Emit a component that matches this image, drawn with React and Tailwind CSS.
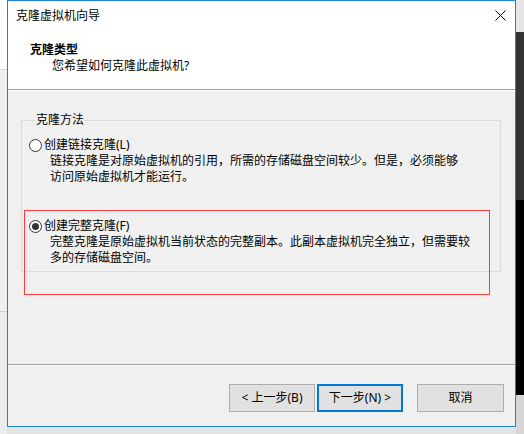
import { useState } from "react";

const Radio = ({ checked, label, lines, onSelect }) => (
  <div className="flex flex-col">
    <button type="button" onClick={onSelect} className="flex h-[16px] items-center text-left">
      <span className="flex h-[13px] w-[13px] items-center justify-center rounded-full border border-[#333333] bg-white">
        {checked && <span className="h-[7px] w-[7px] rounded-full bg-[#333333]" />}
      </span>
      <span className="ml-[2px] whitespace-nowrap">{label}</span>
    </button>
    <div className="pl-[21px] whitespace-nowrap">
      {lines.map((line) => (
        <p key={line}>{line}</p>
      ))}
    </div>
  </div>
);

const App = () => {
  const [mode, setMode] = useState("full");

  return (
    <div className="flex h-[434px] w-[524px] overflow-hidden bg-[#ececec] font-['Noto_Sans','Noto_Sans_CJK_SC',sans-serif] text-[12px] leading-[16px] text-black">
      {/* window behind, left side */}
      <div className="flex w-[7px] flex-col">
        <div className="h-[70px] border-b border-[#d9d9d9] bg-white" />
        <div className="h-[242px] border-b border-[#cfcfcf] bg-[#f0f0f0]" />
        <div className="flex-1 bg-[#ececec]" />
      </div>

      <div className="flex w-[509px] flex-col">
        <div className="flex h-[427px] flex-col border border-[#1883d7] bg-[#f0f0f0]">
          {/* title + header */}
          <div className="flex h-[88px] flex-col bg-white">
            <div className="flex h-[29px] items-center justify-between px-[8px]">
              <span>克隆虚拟机向导</span>
              <svg width="11" height="11" viewBox="0 0 11 11" className="mr-[1px]">
                <path d="M0.5 0.5 L10.5 10.5 M10.5 0.5 L0.5 10.5" stroke="#000" strokeWidth="1" fill="none" />
              </svg>
            </div>
            <div className="mt-[12px] pl-[22px] font-bold">克隆类型</div>
            <div className="pl-[44px]">您希望如何克隆此虚拟机?</div>
          </div>
          <div className="h-[1px] bg-[#a0a0a0]" />
          <div className="h-[1px] bg-white" />

          {/* body */}
          <div className="relative flex-1 pl-[13px] pr-[14px] pt-[21px]">
            <fieldset className="border border-[#dcdcdc] pb-[5px] pl-[7px]">
              <legend className="ml-[6px] px-[1px]">克隆方法</legend>
              <div className="pt-[9px]">
                <Radio
                  checked={mode === "linked"}
                  onSelect={() => setMode("linked")}
                  label="创建链接克隆(L)"
                  lines={[
                    "链接克隆是对原始虚拟机的引用，所需的存储磁盘空间较少。但是，必须能够",
                    "访问原始虚拟机才能运行。",
                  ]}
                />
              </div>
              <div className="pt-[33px]">
                <Radio
                  checked={mode === "full"}
                  onSelect={() => setMode("full")}
                  label="创建完整克隆(F)"
                  lines={[
                    "完整克隆是原始虚拟机当前状态的完整副本。此副本虚拟机完全独立，但需要较",
                    "多的存储磁盘空间。",
                  ]}
                />
              </div>
            </fieldset>
            {/* red annotation */}
            <div className="pointer-events-none absolute left-[16px] top-[119px] h-[85px] w-[466px] border border-[#ff3b3b]" />
          </div>

          <div className="h-[1px] bg-[#a0a0a0]" />
          <div className="h-[1px] bg-white" />

          {/* footer */}
          <div className="flex h-[60px] items-start justify-end pr-[11px] pt-[18px]">
            <button type="button" className="h-[28px] w-[86px] border border-[#adadad] bg-[#e1e1e1]">
              &lt; 上一步(B)
            </button>
            <button type="button" className="ml-[2px] h-[28px] w-[86px] border-2 border-[#0078d7] bg-[#e1e1e1]">
              下一步(N) &gt;
            </button>
            <button type="button" className="ml-[14px] h-[28px] w-[87px] border border-[#adadad] bg-[#e1e1e1]">
              取消
            </button>
          </div>
        </div>
        <div className="flex-1 bg-[#e3e3e3]" />
      </div>

      {/* window behind, right side */}
      <div className="flex w-[8px] flex-col">
        <div className="h-[32px] bg-[#e6e6e6]" />
        <div className="h-[168px] bg-[#333333]" />
        <div className="h-[195px] bg-black" />
        <div className="flex-1 bg-[#d6d6d6]" />
      </div>
    </div>
  );
};

export default App;
